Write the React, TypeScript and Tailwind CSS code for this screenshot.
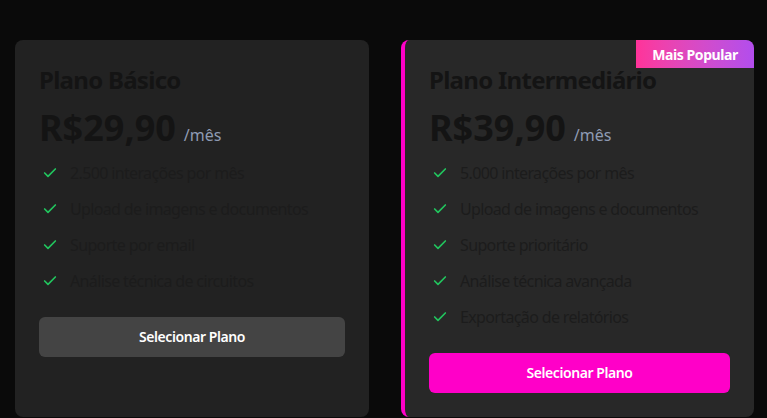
import { Check } from "lucide-react";

type Plan = {
  name: string;
  price: string;
  features: string[];
  popular?: boolean;
};

const PLANS: Plan[] = [
  {
    name: "Plano Básico",
    price: "R$29,90",
    features: [
      "2.500 interações por mês",
      "Upload de imagens e documentos",
      "Suporte por email",
      "Análise técnica de circuitos",
    ],
  },
  {
    name: "Plano Intermediário",
    price: "R$39,90",
    popular: true,
    features: [
      "5.000 interações por mês",
      "Upload de imagens e documentos",
      "Suporte prioritário",
      "Análise técnica avançada",
      "Exportação de relatórios",
    ],
  },
];

export default function App() {
  return (
    <div
      className="min-h-[418px] bg-[#0a0a0a] pt-10 pl-[15px] overflow-hidden"
      style={{ fontFamily: '"Noto Sans", "Open Sans", sans-serif' }}
    >
      <div className="flex items-stretch gap-8">
        {PLANS.map((p) => (
          <PlanCard key={p.name} plan={p} />
        ))}
      </div>
    </div>
  );
}

function PlanCard({ plan }: { plan: Plan }) {
  const popular = !!plan.popular;
  return (
    <div
      className={
        popular
          ? "relative w-[353px] rounded-lg bg-[#282828] border-l-4 border-[#ff00c8] p-6"
          : "relative w-[354px] rounded-lg bg-[#222222] p-6 flex flex-col"
      }
    >
      {popular && (
        <div className="absolute top-0 right-0 h-7 w-[118px] flex items-center justify-center rounded-tr-lg bg-gradient-to-r from-[#ff3399] to-[#b24ded] text-white text-[14px] font-bold tracking-[-0.03em]">
          Mais Popular
        </div>
      )}
      <h3 className="text-2xl leading-8 font-bold text-[#141414] tracking-[-0.03em]">{plan.name}</h3>
      <div className="mt-3 flex items-baseline gap-2">
        <span className="text-4xl leading-10 font-bold text-[#141414]">{plan.price}</span>
        <span className="text-base text-[#8f9bb3]">/mês</span>
      </div>
      <ul className="mt-[13px] flex flex-col gap-3">
        {plan.features.map((f) => (
          <li key={f} className="flex items-center gap-3 h-6 text-base text-[#1c1c1c] tracking-[-0.04em]">
            <Check className="w-4 h-4 text-[#22c55e] ml-[3px]" strokeWidth={2.5} />
            {f}
          </li>
        ))}
      </ul>
      <button
        className={
          popular
            ? "mt-6 w-full h-10 rounded-md bg-[#ff00c8] text-white text-sm font-semibold tracking-[-0.03em]"
            : "mt-6 w-full h-10 rounded-md bg-[#444444] text-white text-sm font-semibold tracking-[-0.03em]"
        }
      >
        Selecionar Plano
      </button>
    </div>
  );
}
